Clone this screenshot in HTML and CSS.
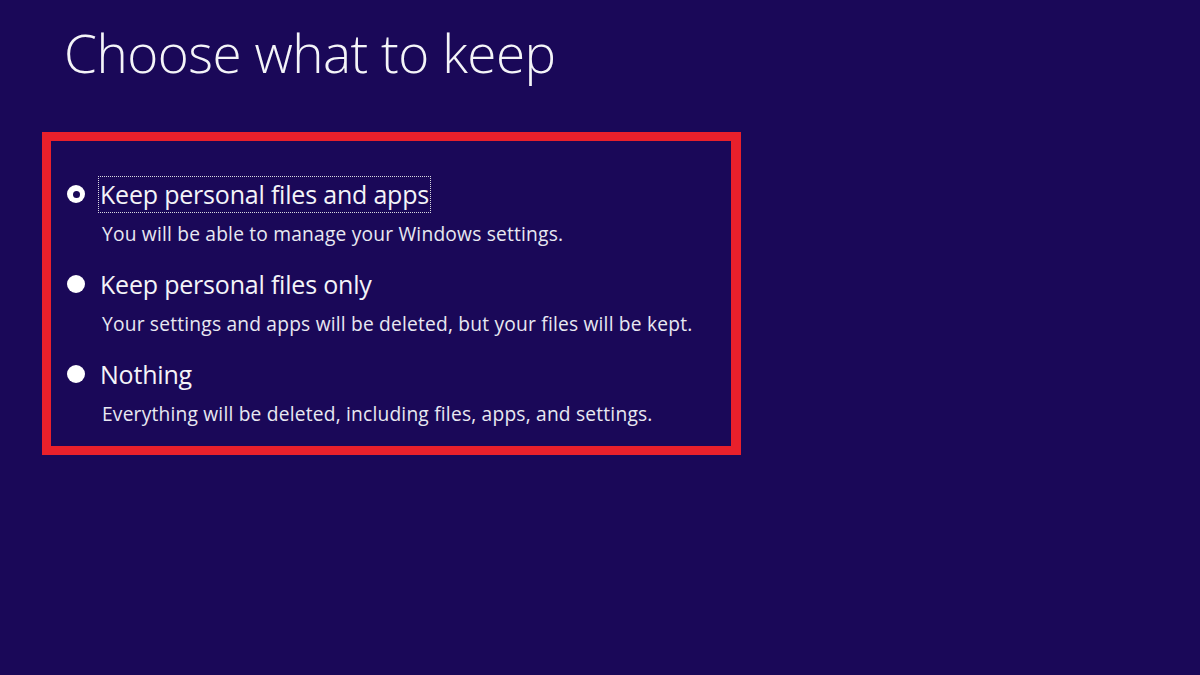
FILE: index.html
```html
<!DOCTYPE html>
<html>
<head>
<meta charset="utf-8">
<link rel="stylesheet" href="styles.css">
</head>
<body>
<div class="page">
  <h1 class="title">Choose what to keep</h1>
  <div class="options">
    <div class="option selected">
      <div class="label-row"><span class="radio"></span><span class="label focus">Keep personal files and apps</span></div>
      <div class="desc">You will be able to manage your Windows settings.</div>
    </div>
    <div class="option">
      <div class="label-row"><span class="radio"></span><span class="label">Keep personal files only</span></div>
      <div class="desc">Your settings and apps will be deleted, but your files will be kept.</div>
    </div>
    <div class="option">
      <div class="label-row"><span class="radio"></span><span class="label">Nothing</span></div>
      <div class="desc">Everything will be deleted, including files, apps, and settings.</div>
    </div>
  </div>
</div>
</body>
</html>
```

FILE: styles.css
```css
html, body {
  margin: 0;
  padding: 0;
  background: #1a0858;
  width: 1200px;
  height: 675px;
  overflow: hidden;
}

.page {
  padding: 0 0 0 42px;
  font-family: "Open Sans", "Noto Sans", "Liberation Sans", sans-serif;
  color: #f4f4f8;
}

.title {
  margin: 0;
  padding: 18px 0 0 22px;
  height: 114px;
  box-sizing: border-box;
  font-weight: 300;
  font-size: 53px;
  line-height: 70px;
  letter-spacing: -0.5px;
}

.options {
  width: 699px;
  height: 323px;
  box-sizing: border-box;
  border: 9px solid #e9202b;
  border-right-width: 10px;
  padding: 33px 0 0 16px;
  margin-top: 18px;
}

.option {
  margin-bottom: 10px;
}

.label-row {
  display: flex;
  align-items: center;
  height: 40px;
}

.radio {
  width: 18px;
  height: 18px;
  border-radius: 50%;
  background: #ffffff;
  flex: none;
  display: flex;
  align-items: center;
  justify-content: center;
  margin-right: 15px;
}

.selected .radio::after {
  content: "";
  width: 7px;
  height: 7px;
  border-radius: 50%;
  background: #1a0858;
}

.label {
  font-size: 25px;
  line-height: 35px;
  padding: 0 1px;
  border: 1px dotted transparent;
  margin-left: -2px;
  letter-spacing: -0.2px;
}

.label.focus {
  border-color: #d8d8e0;
}

.desc {
  font-size: 19.2px;
  line-height: 40px;
  padding-left: 35px;
  color: #e8e8f2;
  letter-spacing: 0.2px;
}
```
